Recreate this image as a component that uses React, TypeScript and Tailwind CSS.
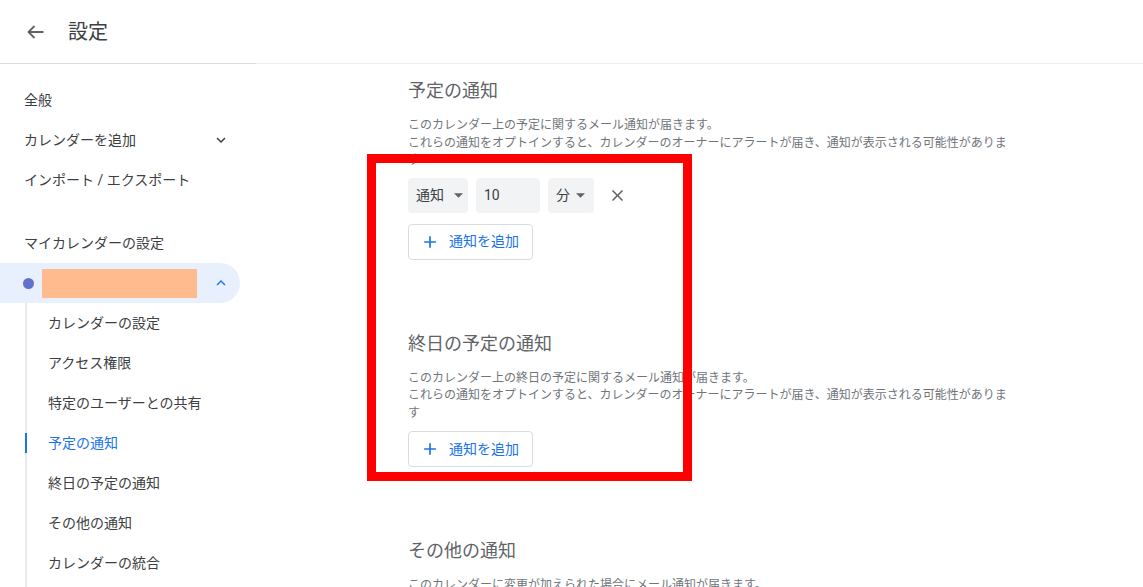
import React from 'react';

const font = { fontFamily: 'Roboto, "Noto Sans CJK JP", sans-serif' };

function Chevron({ up, className }: { up?: boolean; className?: string }) {
  return (
    <svg viewBox="0 0 24 24" className={className} fill="currentColor">
      {up ? (
        <path d="M12 8l-6 6 1.41 1.41L12 10.83l4.59 4.58L18 14z" />
      ) : (
        <path d="M16.59 8.59L12 13.17 7.41 8.59 6 10l6 6 6-6z" />
      )}
    </svg>
  );
}

function Caret() {
  return (
    <svg viewBox="0 0 10 5" className="w-[9px] h-[5px] text-[#5f6368]" fill="currentColor">
      <path d="M0 0l5 5 5-5z" />
    </svg>
  );
}

function AddButton() {
  return (
    <button className="flex items-center h-[36px] w-[125px] pl-[11px] rounded border border-[#dadce0] text-[14px] text-[#1a73e8]">
      <svg viewBox="0 0 24 24" className="w-5 h-5 mr-[9px]" fill="currentColor">
        <path d="M19 13h-6v6h-2v-6H5v-2h6V5h2v6h6v2z" />
      </svg>
      通知を追加
    </button>
  );
}

function Section({
  title,
  lines,
  children,
  className,
}: {
  title: string;
  lines: string[];
  children?: React.ReactNode;
  className?: string;
}) {
  return (
    <section className={className}>
      <h2 className="text-[18px] leading-[28px] text-[#5f6368]">{title}</h2>
      <div className="mt-[12px] w-[600px] text-[12px] leading-[17.5px] text-[#70757a]">
        {lines.map((l) => (
          <p key={l}>{l}</p>
        ))}
      </div>
      {children}
    </section>
  );
}

const subItems = [
  'カレンダーの設定',
  'アクセス権限',
  '特定のユーザーとの共有',
  '予定の通知',
  '終日の予定の通知',
  'その他の通知',
  'カレンダーの統合',
];

export default function App() {
  const optIn =
    'これらの通知をオプトインすると、カレンダーのオーナーにアラートが届き、通知が表示される可能性があります';

  return (
    <div className="relative h-[587px] overflow-hidden bg-white text-[#3c4043]" style={font}>
      <header className="flex items-center h-16 border-b border-[#dadce0]">
        <svg viewBox="0 0 24 24" className="ml-6 w-6 h-6 text-[#5f6368]" fill="none" stroke="currentColor" strokeWidth="1.8">
          <path d="M19.5 12H4.5M10.5 6l-6 6 6 6" />
        </svg>
        <h1 className="ml-5 text-[20px] text-[#3c4043]">設定</h1>
      </header>

      <div className="flex">
        <nav className="w-[256px] shrink-0 pr-4 pt-4 text-[14px]">
          <div className="h-10 flex items-center pl-6">全般</div>
          <div className="h-10 flex items-center justify-between pl-6 pr-[10px]">
            カレンダーを追加
            <Chevron className="w-[18px] h-[18px] text-[#3c4043]" />
          </div>
          <div className="h-10 flex items-center pl-6">インポート / エクスポート</div>
          <div className="mt-[23px] h-10 flex items-center pl-6">マイカレンダーの設定</div>
          <div className="h-10 flex items-center rounded-r-full bg-[#e8f0fe] pl-[23px] pr-[10px]">
            <span className="w-[11px] h-[11px] rounded-full bg-[#6271c9]" />
            <span className="ml-[8px] w-[155px] h-[29px] bg-[#ffbb8e]" />
            <span className="flex-1" />
            <Chevron up className="w-[18px] h-[18px] text-[#1a73e8]" />
          </div>
          <ul className="ml-[25px] border-l-2 border-[#e8eaed] pb-10">
            {subItems.map((s) => {
              const active = s === '予定の通知';
              return (
                <li
                  key={s}
                  className={`relative h-10 flex items-center pl-[21px] ${active ? 'text-[#1a73e8]' : ''}`}
                >
                  {active && <span className="absolute -left-[2px] top-[10px] w-[2px] h-5 bg-[#1a73e8]" />}
                  {s}
                </li>
              );
            })}
          </ul>
        </nav>

        <main className="flex-1 pl-[152px] pt-[13px] border-t border-[#eeeeee] -mt-px">
          <Section title="予定の通知" lines={['このカレンダー上の予定に関するメール通知が届きます。', optIn]}>
            <div className="mt-[8px] flex items-center gap-2 text-[14px] text-[#3c4043]">
              <div className="h-[35px] w-[60px] rounded bg-[#f1f3f4] flex items-center pl-2 gap-[10px]">
                通知
                <Caret />
              </div>
              <div className="h-[35px] w-[64px] rounded bg-[#f1f3f4] flex items-center pl-2">10</div>
              <div className="h-[35px] w-[46px] rounded bg-[#f1f3f4] flex items-center pl-2 gap-[6px]">
                分
                <Caret />
              </div>
              <svg viewBox="0 0 24 24" className="ml-[6px] w-[19px] h-[19px] text-[#5f6368]" fill="currentColor">
                <path d="M19 6.41L17.59 5 12 10.59 6.41 5 5 6.41 10.59 12 5 17.59 6.41 19 12 13.41 17.59 19 19 17.59 13.41 12z" />
              </svg>
            </div>
            <div className="mt-[11px]">
              <AddButton />
            </div>
          </Section>

          <Section
            className="mt-[70px]"
            title="終日の予定の通知"
            lines={['このカレンダー上の終日の予定に関するメール通知が届きます。', optIn]}
          >
            <div className="mt-[9px]">
              <AddButton />
            </div>
          </Section>

          <Section
            className="mt-[70px]"
            title="その他の通知"
            lines={['このカレンダーに変更が加えられた場合にメール通知が届きます。']}
          />
        </main>
      </div>

      <div className="absolute left-[367px] top-[154px] w-[325px] h-[327px] border-[9px] border-[#ff0000]" />
    </div>
  );
}
